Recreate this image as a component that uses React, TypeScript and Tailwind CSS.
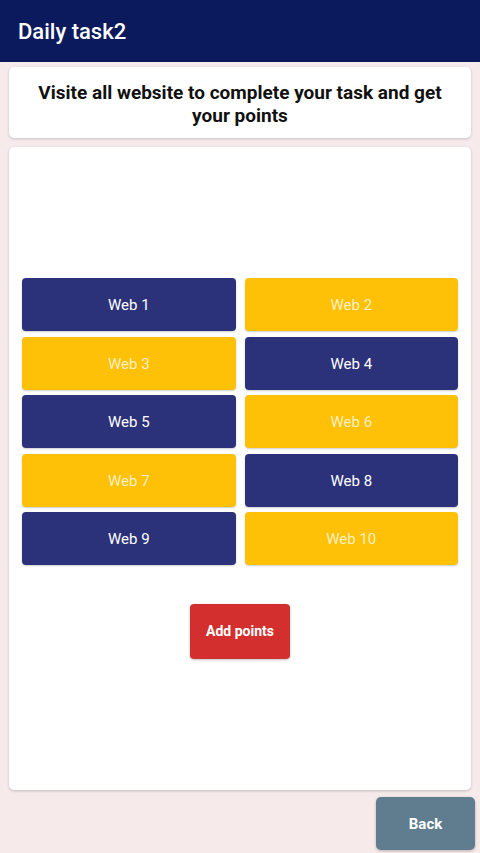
const webs = Array.from({ length: 10 }, (_, i) => i + 1);

export default function App() {
  return (
    <div
      className="flex h-[853px] w-[480px] flex-col overflow-hidden bg-[#f6eaea]"
      style={{ fontFamily: "Roboto, 'Noto Sans', sans-serif" }}
    >
      <header className="flex h-[62px] shrink-0 items-center bg-[#0b1a5c] px-[18px]">
        <h1 className="text-[22px] font-medium text-white">Daily task2</h1>
      </header>

      <div className="mx-[9px] mt-[5px] flex h-[71px] items-center justify-center rounded-[5px] bg-white px-[26px] shadow-[0_1px_3px_rgba(0,0,0,0.18)]">
        <p className="pt-[2px] text-center text-[19px] font-bold leading-[23px] text-[#111]">
          Visite all website to complete your task and get your points
        </p>
      </div>

      <div className="mx-[9px] mt-[9px] flex h-[643px] flex-col items-center rounded-[5px] bg-white px-[13px] pt-[131px] shadow-[0_1px_3px_rgba(0,0,0,0.2)]">
        <div className="grid w-full grid-cols-2 gap-x-[9px] gap-y-[5.5px]">
          {webs.map(n => {
            const navy = Math.ceil(n / 2) % 2 === 1 ? n % 2 === 1 : n % 2 === 0;
            return (
              <button
                key={n}
                className={
                  navy
                    ? "h-[53px] rounded-[4px] bg-[#2b327a] pt-[2px] text-[15px] text-white shadow-[0_1px_2px_rgba(0,0,0,0.2)]"
                    : "h-[53px] rounded-[4px] bg-[#fec107] pt-[2px] text-[15px] text-[#fdefc2] shadow-[0_1px_2px_rgba(0,0,0,0.2)]"
                }
              >
                Web {n}
              </button>
            );
          })}
        </div>

        <button className="mt-[39px] h-[55px] w-[100px] rounded-[4px] bg-[#d32f2f] text-[14px] font-bold text-white shadow-[0_1px_3px_rgba(0,0,0,0.25)]">
          Add points
        </button>
      </div>

      <div className="mt-[7px] flex justify-end pr-[5px]">
        <button className="h-[53px] w-[99px] rounded-[5px] bg-[#5f7d8e] pt-[2px] text-[15px] font-bold text-white shadow-[0_1px_3px_rgba(0,0,0,0.25)]">
          Back
        </button>
      </div>
    </div>
  );
}
